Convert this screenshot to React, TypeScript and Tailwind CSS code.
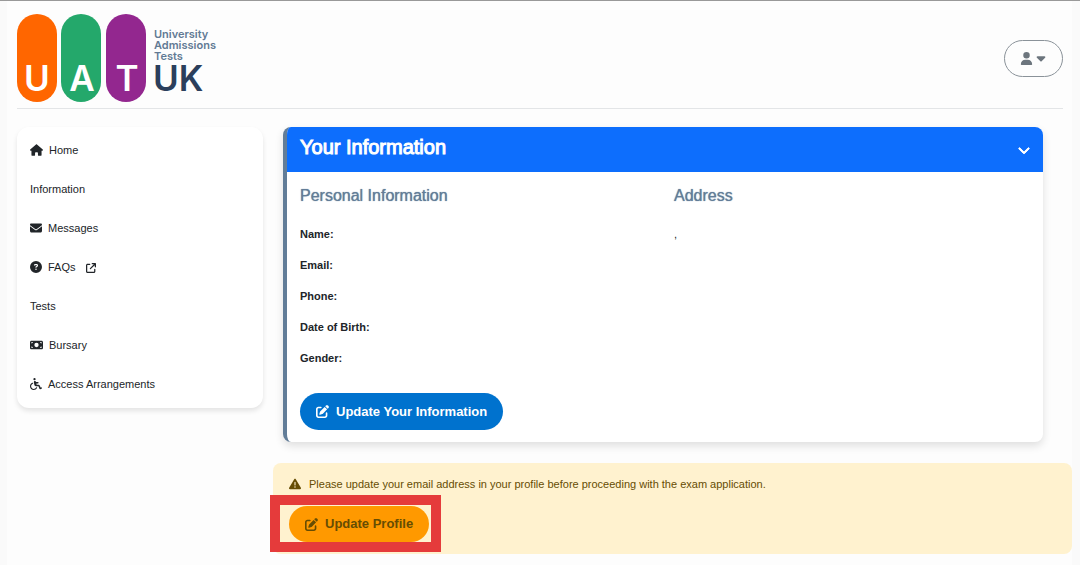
import type { ReactNode } from 'react';
import {
  FaHouse,
  FaEnvelope,
  FaCircleQuestion,
  FaMoneyBill,
  FaWheelchair,
  FaUser,
  FaCaretDown,
  FaChevronDown,
  FaPenToSquare,
  FaTriangleExclamation,
  FaArrowUpRightFromSquare,
} from 'react-icons/fa6';

interface NavItem {
  label: string;
  icon?: ReactNode;
  external?: boolean;
}

const navItems: NavItem[] = [
  { label: 'Home', icon: <FaHouse className="w-[13px] h-3" /> },
  { label: 'Information' },
  { label: 'Messages', icon: <FaEnvelope className="size-3" /> },
  { label: 'FAQs', icon: <FaCircleQuestion className="size-3" />, external: true },
  { label: 'Tests' },
  { label: 'Bursary', icon: <FaMoneyBill className="w-[13px] h-3" /> },
  { label: 'Access Arrangements', icon: <FaWheelchair className="size-3" /> },
];

const personalFields = ['Name:', 'Email:', 'Phone:', 'Date of Birth:', 'Gender:'];

function Logo() {
  return (
    <a href="#" aria-label="UAT UK" className="block font-[Inter,sans-serif]">
      <svg width="204" height="88" viewBox="0 0 204 88">
        <rect x="0" y="0" width="40" height="88" rx="20" fill="#ff6600" />
        <rect x="44" y="0" width="40" height="88" rx="20" fill="#24a86b" />
        <rect x="89" y="0" width="40" height="88" rx="20" fill="#93278f" />
        <g fill="#fff" fontSize="35" fontWeight="600" textAnchor="middle">
          <text x="20" y="77">U</text>
          <text x="65" y="77">A</text>
          <text x="110" y="77">T</text>
        </g>
        <g fill="#627a94" fontSize="11" fontWeight="600">
          <text x="137" y="24">University</text>
          <text x="137" y="35">Admissions</text>
          <text x="137" y="46">Tests</text>
        </g>
        <text x="136" y="77" fill="#2b3f5c" fontSize="35" fontWeight="600">UK</text>
      </svg>
    </a>
  );
}

function Sidebar() {
  return (
    <nav className="w-[246px] shrink-0 self-start rounded-xl bg-white py-1 shadow-[0_3px_5px_rgba(0,0,0,0.1)]">
      <ul>
        {navItems.map((item) => (
          <li key={item.label}>
            <a href="#" className="flex h-[39px] items-center px-[13px] text-[11px] text-[#212529]">
              {item.icon && <span className="mr-1.5 pb-px">{item.icon}</span>}
              {item.label}
              {item.external && <FaArrowUpRightFromSquare className="ml-2.5 size-2.5" />}
            </a>
          </li>
        ))}
      </ul>
    </nav>
  );
}

function InformationCard() {
  return (
    <section className="ml-2.5 mr-[29px] overflow-hidden rounded-lg border-l-4 border-[#627d98] bg-white shadow-[0_4px_8px_rgba(0,0,0,0.12)]">
      <button
        type="button"
        aria-expanded="true"
        className="flex h-[45px] w-full items-center justify-between bg-[#0d6efd] px-[13px] text-white"
      >
        <span className="pb-1.5 text-xl [-webkit-text-stroke:1px_white]">Your Information</span>
        <FaChevronDown className="size-3 stroke-white stroke-[40px]" />
      </button>
      <div className="grid grid-cols-2 gap-x-[18px] px-[13px] pt-3">
        <div>
          <h3 className="text-base leading-6 text-[#627d98] [text-shadow:0_0_1px_#627d98]">
            Personal Information
          </h3>
          <dl className="mt-[11px]">
            {personalFields.map((field) => (
              <div key={field} className="flex h-[31px] items-center text-[11px] font-bold text-[#212529]">
                <dt>{field}</dt>
                <dd />
              </div>
            ))}
          </dl>
        </div>
        <div>
          <h3 className="text-base leading-6 text-[#627d98] [text-shadow:0_0_1px_#627d98]">Address</h3>
          <p className="mt-[11px] flex h-[31px] items-center text-[11px] text-[#212529]">,</p>
        </div>
      </div>
      <div className="px-[13px] pt-[19px] pb-3">
        <button
          type="button"
          className="flex h-[37px] items-center gap-[7px] rounded-full bg-[#0072ce] px-4 text-[13px] font-bold text-white"
        >
          <FaPenToSquare className="size-[13px]" />
          Update Your Information
        </button>
      </div>
    </section>
  );
}

function ProfileAlert() {
  return (
    <div role="alert" className="mt-[21px] rounded-lg bg-[#fff2cf] px-4 py-3 text-[#664d03]">
      <p className="flex h-[18px] items-center gap-2 text-[11px]">
        <FaTriangleExclamation className="size-3" />
        Please update your email address in your profile before proceeding with the exam application.
      </p>
      <div className="relative mt-[13px] w-fit">
        <button
          type="button"
          className="flex h-9 items-center gap-[7px] rounded-full bg-[#ff9900] px-4 text-[13px] font-bold text-[#664d03]"
        >
          <FaPenToSquare className="size-[13px]" />
          Update Profile
        </button>
        <div className="pointer-events-none absolute -top-[11px] -right-3 -bottom-2.5 -left-[19px] border-[10px] border-[#e53b3b]" />
      </div>
    </div>
  );
}

export default function App() {
  return (
    <div className="min-h-screen border-t border-[#999999] bg-[#fafafa] pr-2 pl-[7px] font-['Liberation_Sans',Arial,sans-serif]">
      <div className="min-h-screen bg-[#fdfdfd] pl-2.5">
        <header className="mr-[9px] flex h-[108px] items-center justify-between border-b border-[#e3e5e7] pt-[7px]">
          <Logo />
          <button
            type="button"
            aria-label="Account"
            className="flex h-[37px] w-[59px] items-center justify-center gap-px rounded-full border border-[#8a9299] text-[#6c757d]"
          >
            <FaUser className="size-[13px]" />
            <FaCaretDown className="size-3.5" />
          </button>
        </header>
        <div className="mt-[18px] flex gap-2.5">
          <Sidebar />
          <main className="min-w-0 flex-1">
            <InformationCard />
            <ProfileAlert />
          </main>
        </div>
      </div>
    </div>
  );
}
